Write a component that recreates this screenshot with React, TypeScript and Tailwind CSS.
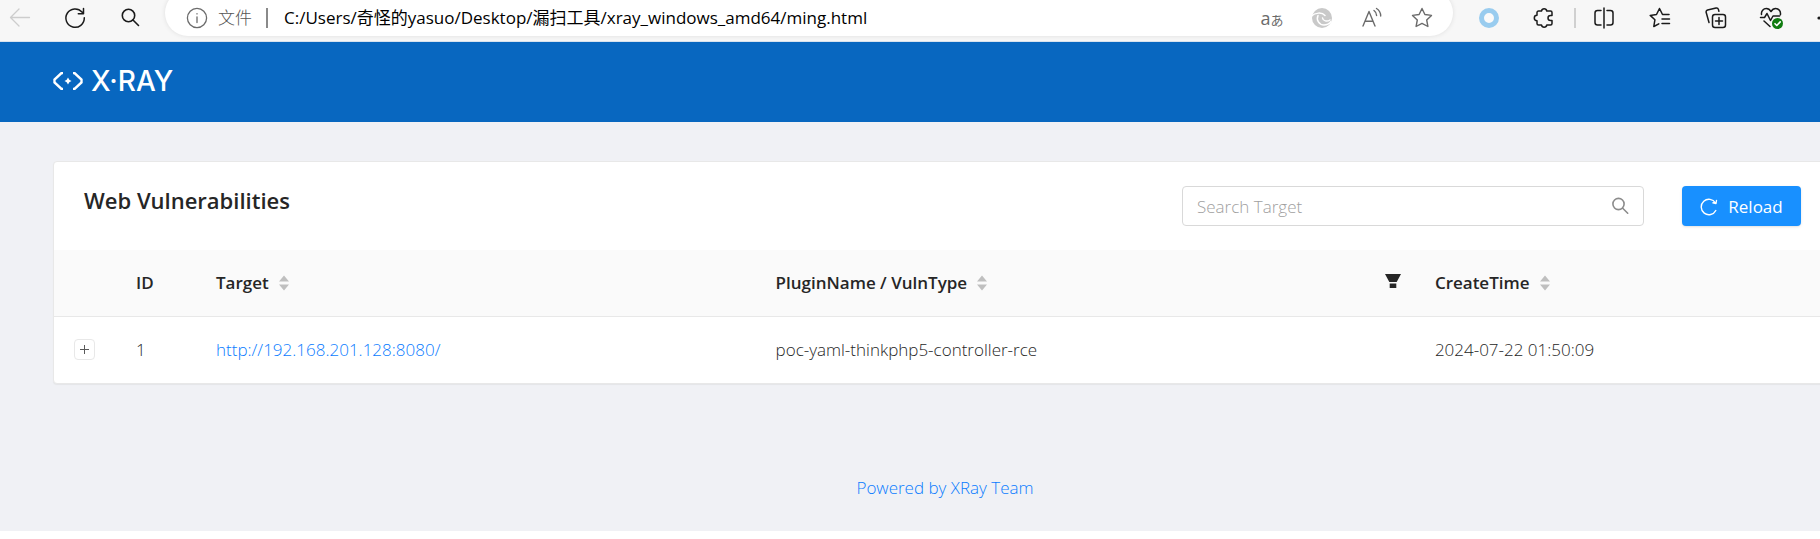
import React from "react";
import type { ReactNode } from "react";

const line = { fill: "none", stroke: "currentColor", strokeLinecap: "round", strokeLinejoin: "round" } as const;

function IconButton({ label, className = "", children }: { label: string; className?: string; children: ReactNode }) {
  return (
    <button type="button" aria-label={label} className={`flex h-6 w-6 shrink-0 items-center justify-center ${className}`}>
      {children}
    </button>
  );
}

function BrowserBar() {
  return (
    <div className="-mr-5 flex h-[42px] items-start border-b border-[#d9e3ee] bg-[#f7f7f7] text-[#1b1b1b]">
      <div className="flex h-9 w-[165px] shrink-0 items-center gap-8 pl-2">
        <IconButton label="Back" className="text-[#cdcdcd]">
          <svg width="24" height="24" viewBox="0 0 24 24" {...line} strokeWidth="1.3">
            <path d="M21.500 11.500H2.500M11 3 2.500 11.500 11 20" />
          </svg>
        </IconButton>
        <IconButton label="Refresh">
          <svg width="24" height="24" viewBox="0 0 24 24" {...line} strokeWidth="1.5">
            <path d="M20.300 11.800A9.200 9.200 0 1 1 18 6l1.500 1.700M19.500 2.500v5.200h-5.200" />
          </svg>
        </IconButton>
        <IconButton label="Search">
          <svg width="24" height="24" viewBox="0 0 24 24" {...line} strokeWidth="1.6">
            <circle cx="8.500" cy="9.500" r="6.200" />
            <path d="m13 14 5.500 5.500" />
          </svg>
        </IconButton>
      </div>
      <div className="-mt-2.5 flex h-[46px] min-w-0 flex-1 items-center rounded-full bg-white pl-[21px] pr-[19px] pt-2.5 shadow-[0_0_5px_rgba(0,0,0,0.1)]">
        <svg width="22" height="22" viewBox="0 0 22 22" {...line} strokeWidth="1.3" className="shrink-0 text-[#6b6b6b]">
          <circle cx="11" cy="11" r="9.600" />
          <path d="M11 9.800v5.700M11 6.600v.300" />
        </svg>
        <span className="ml-2.5 shrink-0 text-[17px] font-light leading-6 text-[#555555]">文件</span>
        <span className="ml-3.5 h-5 w-0.5 shrink-0 bg-[#8a8a8a]" />
        <input
          aria-label="Address"
          defaultValue="C:/Users/奇怪的yasuo/Desktop/漏扫工具/xray_windows_amd64/ming.html"
          className="ml-4 min-w-0 flex-1 bg-transparent text-[17px] text-black outline-none"
        />
        <div className="flex shrink-0 items-center gap-[26px] text-[#6b6b6b]">
          <IconButton label="Translate">
            <span className="flex items-baseline whitespace-nowrap leading-5">
              <span className="text-lg">a</span>
              <span className="text-[13px]">あ</span>
            </span>
          </IconButton>
          <IconButton label="Shopping" className="text-[#c9c9c9]">
            <svg width="22" height="22" viewBox="0 0 22 22">
              <circle cx="11" cy="11" r="10" fill="currentColor" />
              <g fill="none" stroke="white" strokeWidth="1.5" strokeLinecap="round">
                <path d="M.500 9C4 5.500 11 5 14 8.500" />
                <path d="M7 8.500c-2 4.500 1 9.500 6 9.500 3 0 5.500-1.500 7-3.500" />
                <path d="M11.500 11c.500 3 4.500 4 7.500 2" />
              </g>
            </svg>
          </IconButton>
          <IconButton label="Read aloud">
            <svg width="22" height="22" viewBox="0 0 22 22" {...line} strokeWidth="1.4">
              <path d="M2 19 8 4.500 14 19M4 14.200h8M13 3.500c1.700 1.200 2.600 3 2.600 5M15.500 1.500c2.800 1.800 4.200 4.500 4.200 7.500" />
            </svg>
          </IconButton>
          <IconButton label="Favorite">
            <svg width="22" height="22" viewBox="0 0 22 22" {...line} strokeWidth="1.4">
              <path d="m11 1.500 2.900 6 6.600.900-4.800 4.600 1.200 6.500L11 16.400l-5.900 3.100L6.300 13 1.500 8.400l6.600-.900z" />
            </svg>
          </IconButton>
        </div>
      </div>
      <div className="flex h-9 shrink-0 items-center pl-6">
        <IconButton label="Assistant">
          <svg width="22" height="22" viewBox="0 0 22 22">
            <circle cx="11" cy="11" r="7.500" fill="#fafafa" stroke="#99ccef" strokeWidth="5" />
          </svg>
        </IconButton>
        <IconButton label="Extensions" className="ml-[31px]">
          <svg width="22" height="22" viewBox="0 0 22 22" {...line} strokeWidth="1.5">
            <path d="M5.500 4h3a2.700 2.700 0 0 1 5.300 0h3.700A1.500 1.500 0 0 1 19 5.500v3h-1.500a2.500 2.500 0 0 0 0 5H19v3a1.500 1.500 0 0 1-1.500 1.500h-3.700a2.700 2.700 0 0 1-5.300 0h-3A1.500 1.500 0 0 1 4 16.500v-2.800a2.700 2.700 0 0 1 0-5.400V5.500A1.500 1.500 0 0 1 5.500 4z" />
          </svg>
        </IconButton>
        <span className="ml-[18px] h-5 w-0.5 bg-[#d0d0d0]" />
        <div className="ml-4 flex gap-8">
          <IconButton label="Split screen">
            <svg width="22" height="22" viewBox="0 0 22 22" {...line} strokeWidth="1.5">
              <path d="M8 3.500H4.500a2.500 2.500 0 0 0-2.500 2.500v9.500A2.500 2.500 0 0 0 4.500 18H8M14 3.500h3.500A2.500 2.500 0 0 1 20 6v9.500a2.500 2.500 0 0 1-2.500 2.500H14M11 1v20" />
            </svg>
          </IconButton>
          <IconButton label="Favorites">
            <svg width="22" height="22" viewBox="0 0 22 22" {...line} strokeWidth="1.5">
              <path d="M20 7.500h-6.500L10.500 1.500 7.500 7.500l-6.300.900 4.700 4.400L4.800 19.500l5-2.700M13 12h7.500M13 16.500h7.500" />
            </svg>
          </IconButton>
          <IconButton label="Collections">
            <svg width="22" height="22" viewBox="0 0 22 22" {...line} strokeWidth="1.5">
              <rect x="7.500" y="7.500" width="13" height="13" rx="2.500" />
              <path d="M14 10.500v7M10.500 14h7M4 15.500 1.200 5.500a2 2 0 0 1 1.400-2.500L11 1a2 2 0 0 1 2.400 1.400l.500 1.800" />
            </svg>
          </IconButton>
          <IconButton label="Browser essentials">
            <svg width="26" height="24" viewBox="0 0 26 24" {...line} strokeWidth="1.5" className="shrink-0">
              <path d="M2.500 8.500C2 5 4.500 2.500 7.300 2.500c2 0 3.700 1.300 4.700 3 1-1.700 2.700-3 4.700-3 3 0 5.300 2.700 4.700 6.300" />
              <path d="M1.500 11.500h4l2.500-4 3.500 7 2.500-4.500h6.500M5 15l6 5.500" />
              <circle cx="18.500" cy="17.500" r="5.500" fill="#107c10" stroke="none" />
              <path d="m16 17.700 1.800 1.800 3.400-3.600" stroke="white" strokeWidth="1.6" />
            </svg>
          </IconButton>
          <IconButton label="More">
            <svg width="22" height="22" viewBox="0 0 22 22" fill="currentColor">
              <circle cx="2" cy="11" r="1.600" />
              <circle cx="9" cy="11" r="1.600" />
              <circle cx="16" cy="11" r="1.600" />
            </svg>
          </IconButton>
        </div>
      </div>
    </div>
  );
}

function SortHeader({ title }: { title: string }) {
  return (
    <button type="button" className="flex items-center gap-2.5 font-semibold">
      {title}
      <svg width="10" height="16" viewBox="0 0 10 16" fill="#bfbfbf" aria-hidden="true">
        <path d="M5 .500 10 6.500H0zM5 15.500 0 9.500h10z" />
      </svg>
    </button>
  );
}

function VulnTable() {
  return (
    <table className="w-full table-fixed border-collapse text-left text-[17px] leading-[26px]">
      <colgroup>
        <col className="w-[62px]" />
        <col className="w-20" />
        <col className="w-[31.4%]" />
        <col className="w-[37%]" />
        <col />
      </colgroup>
      <thead className="bg-[#fafafa] text-[#262626]">
        <tr className="h-[66px] border-b border-[#e8e8e8]">
          <th aria-label="Expand" />
          <th className="px-5 font-semibold">ID</th>
          <th className="px-5"><SortHeader title="Target" /></th>
          <th className="pl-5 pr-3.5">
            <div className="flex items-center justify-between">
              <SortHeader title="PluginName / VulnType" />
              <button type="button" aria-label="Filter">
                <svg width="16" height="16" viewBox="0 0 16 16" fill="currentColor" className="mb-1">
                  <path d="M0 1h16l-4.300 8H4.300zM4.700 10.500h6.600V15H4.700z" />
                </svg>
              </button>
            </div>
          </th>
          <th className="px-5"><SortHeader title="CreateTime" /></th>
        </tr>
      </thead>
      <tbody className="font-light text-[#262626]">
        <tr className="h-[67px]">
          <td className="pl-5">
            <button type="button" aria-label="Expand row" className="flex size-[21px] items-center justify-center rounded-sm border border-[#e8e8e8] bg-white">
              <svg width="9" height="9" viewBox="0 0 9 9" stroke="#595959"><path d="M4.500 0v9M0 4.500h9" /></svg>
            </button>
          </td>
          <td className="px-5">1</td>
          <td className="px-5"><a href="http://192.168.201.128:8080/" className="text-[#0a7cff]">http://192.168.201.128:8080/</a></td>
          <td className="px-5">poc-yaml-thinkphp5-controller-rce</td>
          <td className="px-5">2024-07-22 01:50:09</td>
        </tr>
      </tbody>
    </table>
  );
}

export default function App() {
  return (
    <div className="overflow-hidden bg-[#f0f1f5] font-['Open_Sans','Noto_Sans_CJK_SC',sans-serif]">
      <BrowserBar />
      <header className="flex h-20 items-center gap-2 bg-[#0867c0] pb-[3px] pl-[53px] text-white">
        <svg width="30" height="18" viewBox="0 0 30 18" fill="none" stroke="currentColor" strokeWidth="2.400" aria-hidden="true">
          <path d="M10 1H8.500L1.500 7.500v3L8.500 17H10M20 1h1.500l7 6.500v3l-7 6.500H20" />
          <path d="M15 5.500 16.300 7.700 18.500 9l-2.200 1.300L15 12.500l-1.300-2.200L11.500 9l2.200-1.300z" fill="currentColor" stroke="none" />
        </svg>
        <span className="font-['Inter'] text-[28px] font-medium leading-none">X·RAY</span>
      </header>
      <div className="-mr-[70px] px-[53px] pb-[31px] pt-[39px]">
        <main className="rounded-sm border border-[#e8e8e8] bg-white shadow-[0_1px_1px_#e4e5e8]">
          <div className="flex h-[88px] items-start gap-[38px] pl-[30px] pr-[35px]">
            <h1 className="mt-[22px] flex-1 text-[22px] font-semibold leading-8 text-[#262626]">Web Vulnerabilities</h1>
            <div className="mt-6 flex h-10 w-[462px] items-center rounded border border-[#d9d9d9] px-3.5">
              <input aria-label="Search Target" placeholder="Search Target" className="min-w-0 flex-1 bg-transparent pt-0.5 text-[17px] font-light outline-none placeholder:text-[#a0a0a0]" />
              <button type="button" aria-label="Search" className="text-[#8c8c8c]">
                <svg width="18" height="18" viewBox="0 0 18 18" {...line} strokeWidth="1.6"><circle cx="7.500" cy="7" r="5.600" /><path d="m11.700 11.200 5 5" /></svg>
              </button>
            </div>
            <button type="button" className="mt-6 flex h-10 w-[119px] items-center justify-center gap-2.5 rounded bg-[#1890ff] pt-px text-[17px] text-white shadow-sm">
              <svg width="18" height="18" viewBox="0 0 18 18" {...line} strokeWidth="1.4"><path d="M15.800 12.500A7.700 7.700 0 1 1 15.500 5M16.500 2.500l-.500 3-3-.700" /></svg>
              Reload
            </button>
          </div>
          <VulnTable />
        </main>
        <footer className="mt-[92px] text-center text-[17px] font-light leading-6">
          <a href="#team" className="text-[#0a7cff]">Powered by XRay Team</a>
        </footer>
      </div>
      <div className="h-2 bg-white" />
    </div>
  );
}
